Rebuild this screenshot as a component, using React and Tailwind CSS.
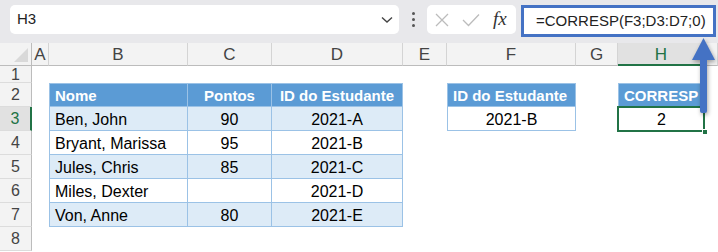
import React from 'react';

const font = { fontFamily: '"Liberation Sans", Arial, sans-serif' };

const colLetters = ['', 'A', 'B', 'C', 'D', 'E', 'F', 'G', 'H', ''];

const students = [
  ['Ben, John', '90', '2021-A'],
  ['Bryant, Marissa', '95', '2021-B'],
  ['Jules, Chris', '85', '2021-C'],
  ['Miles, Dexter', '', '2021-D'],
  ['Von, Anne', '80', '2021-E'],
];

const Empty = () => <div className="bg-white" />;

const HeadCell = ({ children, first }) => (
  <div
    className={`bg-[#5b9bd5] text-white font-bold text-[15px] pt-[2px] flex items-center justify-center border-t border-b border-r border-[#9bc2e6] ${first ? 'border-l justify-start pl-[5px]' : ''}`}
  >
    {children}
  </div>
);

const DataCell = ({ children, band, align = 'center', first }) => (
  <div
    className={`${band ? 'bg-[#ddebf7]' : 'bg-white'} text-[16px] pt-[2px] text-black flex items-center border-b border-r border-[#9bc2e6] ${first ? 'border-l' : ''} ${align === 'left' ? 'justify-start pl-[5px]' : 'justify-center'}`}
  >
    {children}
  </div>
);

const RowHead = ({ n, active }) => (
  <div
    className={`flex items-center justify-center text-[16px] pt-[1px] border-b border-[#dcdcdc] ${active ? 'bg-[#e1e1e1] text-[#217346] border-r-2 border-r-[#217346]' : 'bg-[#f3f3f3] text-[#444] border-r border-r-[#bcbcbc]'}`}
  >
    {n}
  </div>
);

export default function App() {
  return (
    <div className="relative w-[718px] h-[252px] overflow-hidden bg-white" style={font}>
      {/* formula bar */}
      <div className="h-[43px] bg-[#e8e8eb] flex items-start pt-[5px] pl-[10px]">
        <div className="w-[389px] h-[29px] bg-white rounded-[5px] flex items-center justify-between pl-[7px] pr-[6px]">
          <span className="text-[15px] text-[#222]">H3</span>
          <svg width="12" height="8" viewBox="0 0 12 8">
            <path d="M1 1.5 L6 6 L11 1.5" fill="none" stroke="#444" strokeWidth="1.4" />
          </svg>
        </div>
        <div className="w-[28px] h-[29px] flex flex-col items-center justify-center gap-[3px]">
          <span className="w-[3px] h-[3px] bg-[#555] rounded-full" />
          <span className="w-[3px] h-[3px] bg-[#555] rounded-full" />
          <span className="w-[3px] h-[3px] bg-[#555] rounded-full" />
        </div>
        <div className="w-[89px] h-[29px] bg-white rounded-[5px] flex items-center pl-[8px] gap-[13px]">
          <svg width="14" height="14" viewBox="0 0 14 14">
            <path d="M1 1 L13 13 M13 1 L1 13" stroke="#bcbcbc" strokeWidth="1.3" fill="none" />
          </svg>
          <svg width="18" height="14" viewBox="0 0 18 14">
            <path d="M1 7 L6.5 12.5 L17 1.5" stroke="#bcbcbc" strokeWidth="1.3" fill="none" />
          </svg>
          <span className="text-[19px] italic text-[#333] leading-none -mt-[3px]" style={{ fontFamily: '"Liberation Serif", "Times New Roman", serif' }}>
            fx
          </span>
        </div>
        <div className="ml-[5px] w-[195px] h-[32px] bg-white border-[3px] border-[#4472c4] flex items-center pl-[12px]">
          <span className="text-[15px] text-[#222]">=CORRESP(F3;D3:D7;0)</span>
        </div>
      </div>

      {/* sheet */}
      <div className="grid grid-cols-[32px_17px_139px_84px_131px_44px_129px_42px_87px_13px] grid-rows-[23px_17px_24px_24px_24px_24px_24px_24px_24px]">
        {colLetters.map((c, i) =>
          i === 0 ? (
            <div key={i} className="bg-[#f3f3f3] border-b border-r border-[#bcbcbc] flex items-end justify-end p-[3px]">
              <svg width="14" height="14" viewBox="0 0 14 14">
                <path d="M14 0 L14 14 L0 14 Z" fill="#d9d9d9" />
              </svg>
            </div>
          ) : c === 'H' ? (
            <div key={i} className="bg-[#e1e1e1] border-b-2 border-b-[#217346] border-r border-r-[#d4d4d4] text-[#217346] text-[17px] pt-[2px] flex items-center justify-center">
              {c}
            </div>
          ) : (
            <div key={i} className="bg-[#f3f3f3] border-b border-b-[#bcbcbc] border-r border-r-[#d4d4d4] text-[#444] text-[17px] pt-[2px] flex items-center justify-center">
              {c}
            </div>
          )
        )}

        {/* row 1 */}
        <RowHead n="1" />
        {Array.from({ length: 9 }).map((_, i) => (
          <Empty key={i} />
        ))}

        {/* row 2 */}
        <RowHead n="2" />
        <Empty />
        <HeadCell first>Nome</HeadCell>
        <HeadCell>Pontos</HeadCell>
        <HeadCell>ID do Estudante</HeadCell>
        <Empty />
        <HeadCell first>ID do Estudante</HeadCell>
        <Empty />
        <HeadCell first>CORRESP</HeadCell>
        <Empty />

        {students.map((s, idx) => {
          const row = idx + 3;
          const band = idx % 2 === 0;
          return (
            <React.Fragment key={row}>
              <RowHead n={row} active={row === 3} />
              <Empty />
              <DataCell band={band} align="left" first>
                {s[0]}
              </DataCell>
              <DataCell band={band}>{s[1]}</DataCell>
              <DataCell band={band}>{s[2]}</DataCell>
              <Empty />
              {row === 3 ? <DataCell first>2021-B</DataCell> : <Empty />}
              <Empty />
              {row === 3 ? (
                <div className="relative bg-white text-[16px] pt-[2px] text-black flex items-center justify-center">
                  2
                  <div className="absolute -inset-y-[1px] -left-[1px] right-0 border-2 border-[#217346]" />
                  <div className="absolute -right-[3px] -bottom-[4px] w-[6px] h-[6px] bg-[#217346] border border-white" />
                </div>
              ) : (
                <Empty />
              )}
              <Empty />
            </React.Fragment>
          );
        })}

        {/* row 8 */}
        <RowHead n="8" />
        {Array.from({ length: 9 }).map((_, i) => (
          <Empty key={i} />
        ))}
      </div>

      {/* arrow overlay */}
      <svg className="absolute left-[688px] top-[34px] drop-shadow-[1px_2px_2px_rgba(0,0,0,0.35)]" width="30" height="84" viewBox="0 0 30 84">
        <rect x="12" y="22" width="7" height="57" rx="2" fill="#4472c4" />
        <path d="M15.5 4 L27 26 L4 26 Z" fill="#4472c4" />
      </svg>
    </div>
  );
}
